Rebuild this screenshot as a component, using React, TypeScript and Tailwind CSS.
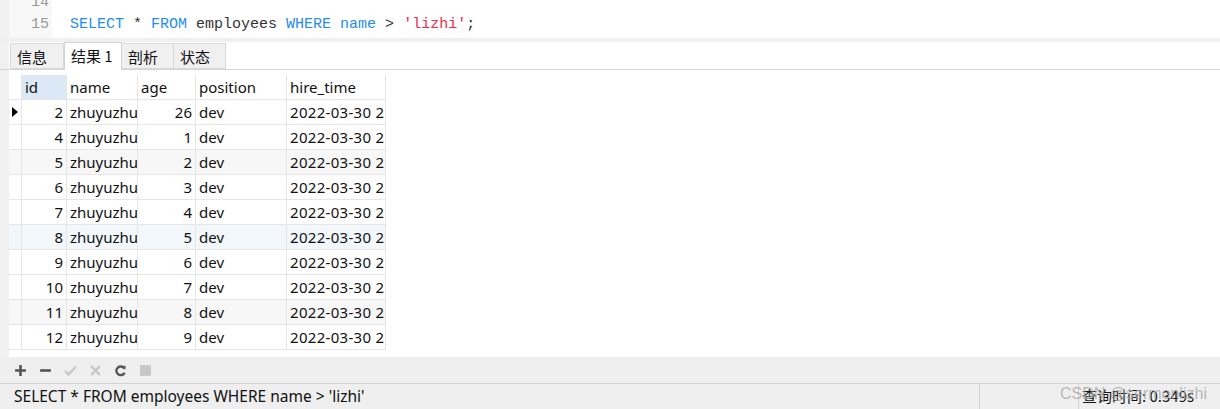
import React from "react";

const rows = [
  { id: 2, age: 26, bg: "bg-white" },
  { id: 4, age: 1, bg: "bg-white" },
  { id: 5, age: 2, bg: "bg-[#f7f7f7]" },
  { id: 6, age: 3, bg: "bg-white" },
  { id: 7, age: 4, bg: "bg-white" },
  { id: 8, age: 5, bg: "bg-[#f2f7fc]" },
  { id: 9, age: 6, bg: "bg-white" },
  { id: 10, age: 7, bg: "bg-white" },
  { id: 11, age: 8, bg: "bg-[#f7f7f7]" },
  { id: 12, age: 9, bg: "bg-white" },
];

const cell = "h-full border-r border-[#e6e6e6] overflow-hidden whitespace-nowrap flex items-center";

const Tab = ({ label, active, w }: { label: string; active?: boolean; w: string }) => (
  <div
    className={
      active
        ? `${w} h-[28px] pl-[6px] flex items-center bg-white border border-b-0 border-[#d4d4d4] -mb-px z-10`
        : `${w} h-[26px] pl-[6px] flex items-center bg-[#f0f0f0] border border-l-0 border-[#d9d9d9] pt-[3px]`
    }
  >
    {label}
  </div>
);

const Toolbar = () => (
  <div className="h-[27px] bg-[#efefef] flex items-center pl-[14px] gap-[12px] border-b border-[#d4d4d4]">
    <svg width="13" height="13" viewBox="0 0 12 12">
      <path d="M6 1v10M1 6h10" stroke="#555" strokeWidth="2.4" />
    </svg>
    <svg width="13" height="13" viewBox="0 0 12 12">
      <path d="M1 6h10" stroke="#555" strokeWidth="2.4" />
    </svg>
    <svg width="13" height="13" viewBox="0 0 12 12">
      <path d="M1 6.5l3.2 3L11 2.5" stroke="#c8c8c8" strokeWidth="2.2" fill="none" />
    </svg>
    <svg width="13" height="13" viewBox="0 0 12 12">
      <path d="M2 2l8 8M10 2l-8 8" stroke="#c8c8c8" strokeWidth="2.2" />
    </svg>
    <svg width="13" height="13" viewBox="0 0 12 12">
      <path d="M9.6 4.2A4 4 0 1 0 9.8 8" stroke="#555" strokeWidth="2.2" fill="none" />
      <path d="M7.2 1.5l3.6 0.3-0.4 3.6z" fill="#555" />
    </svg>
    <svg width="13" height="13" viewBox="0 0 12 12">
      <rect x="1" y="1" width="10" height="10" fill="#c8c8c8" />
    </svg>
  </div>
);

export default function App() {
  return (
    <div className="w-[1220px] h-[409px] bg-white flex flex-col overflow-hidden relative font-['Noto_Sans','Noto_Sans_CJK_SC',sans-serif] text-[15px] text-[#111]">
      {/* editor */}
      <div className="h-[38px] flex overflow-hidden">
        <div className="w-[9px] bg-[#f0f0f0]" />
        <div className="w-[43px] bg-[#f8f8f8] text-right pr-[3px] font-['Liberation_Mono',monospace] text-[15px] leading-[22px] text-[#999]">
          <div className="-mt-[8px]">14</div>
          <div>15</div>
        </div>
        <div className="pl-[18px] font-['Liberation_Mono',monospace] text-[15px] leading-[22px] whitespace-pre">
          <div className="-mt-[8px]">&nbsp;</div>
          <div>
            <span className="text-[#1f8ef1]">SELECT</span>
            <span className="text-[#333]"> * </span>
            <span className="text-[#1f8ef1]">FROM</span>
            <span className="text-[#333]"> employees </span>
            <span className="text-[#1f8ef1]">WHERE</span>
            <span className="text-[#1f8ef1]"> name</span>
            <span className="text-[#333]"> &gt; </span>
            <span className="text-[#ec2a4e]">'lizhi'</span>
            <span className="text-[#333]">;</span>
          </div>
        </div>
      </div>
      <div className="h-[4px] bg-[#efefef]" />

      {/* tabs */}
      <div className="h-[28px] flex items-end border-b border-[#d4d4d4]">
        <div className="w-[9px] self-stretch bg-[#f0f0f0]" />
        <div className="flex items-end pl-px text-[15px] font-['Noto_Sans_CJK_SC',sans-serif]">
          <div className="w-[54px] h-[26px] pl-[6px] flex items-center bg-[#f0f0f0] border border-[#d9d9d9] pt-[3px]">信息</div>
          <Tab label="结果 1" active w="w-[58px]" />
          <Tab label="剖析" w="w-[52px]" />
          <Tab label="状态" w="w-[52px]" />
        </div>
      </div>

      {/* grid */}
      <div className="flex flex-1 min-h-0">
        <div className="w-[9px] bg-[#f0f0f0]" />
        <div className="flex-1 flex flex-col pt-[5px]">
          <div className="w-[377px]">
            <div className="flex h-[25px] border-b border-[#e6e6e6]">
              <div className={`${cell} w-[13px]`} />
              <div className={`${cell} w-[45px] bg-[#dbe8f6] pl-[3px]`}>id</div>
              <div className={`${cell} w-[71px] pl-[3px]`}>name</div>
              <div className={`${cell} w-[58px] pl-[3px]`}>age</div>
              <div className={`${cell} w-[91px] pl-[3px]`}>position</div>
              <div className={`${cell} w-[99px] pl-[3px]`}>hire_time</div>
            </div>
            {rows.map((r, i) => (
              <div key={r.id} className={`flex h-[25px] border-b border-[#e6e6e6] ${r.bg}`}>
                <div className={`${cell} w-[13px] justify-center`}>
                  {i === 0 && (
                    <svg width="6" height="10" viewBox="0 0 6 10">
                      <path d="M0 0l6 5-6 5z" fill="#000" />
                    </svg>
                  )}
                </div>
                <div className={`${cell} w-[45px] justify-end pr-[3px]`}>{r.id}</div>
                <div className={`${cell} w-[71px] pl-[3px]`}>zhuyuzhu</div>
                <div className={`${cell} w-[58px] justify-end pr-[3px]`}>{r.age}</div>
                <div className={`${cell} w-[91px] pl-[3px]`}>dev</div>
                <div className={`${cell} w-[99px] pl-[3px] tracking-[0.3px]`}>2022-03-30 22:10:01</div>
              </div>
            ))}
          </div>
        </div>
      </div>

      <Toolbar />

      {/* status bar */}
      <div className="h-[25px] bg-[#efefef] flex items-center">
        <div className="w-[979px] pl-[14px] whitespace-nowrap text-[15.5px]">SELECT * FROM employees WHERE name &gt; 'lizhi'</div>
        <div className="w-[99px] self-stretch border-l border-[#d4d4d4]" />
        <div className="self-stretch border-l border-[#d4d4d4] pl-[3px] flex items-center whitespace-nowrap font-['Noto_Sans_CJK_SC',sans-serif]">
          查询时间: 0.349s
        </div>
      </div>

      <div className="absolute left-[1060px] top-[382px] text-[16px] text-[#a8a8a8]/80 whitespace-nowrap font-['Liberation_Sans',sans-serif]">
        CSDN @sermonlizhi
      </div>
    </div>
  );
}
